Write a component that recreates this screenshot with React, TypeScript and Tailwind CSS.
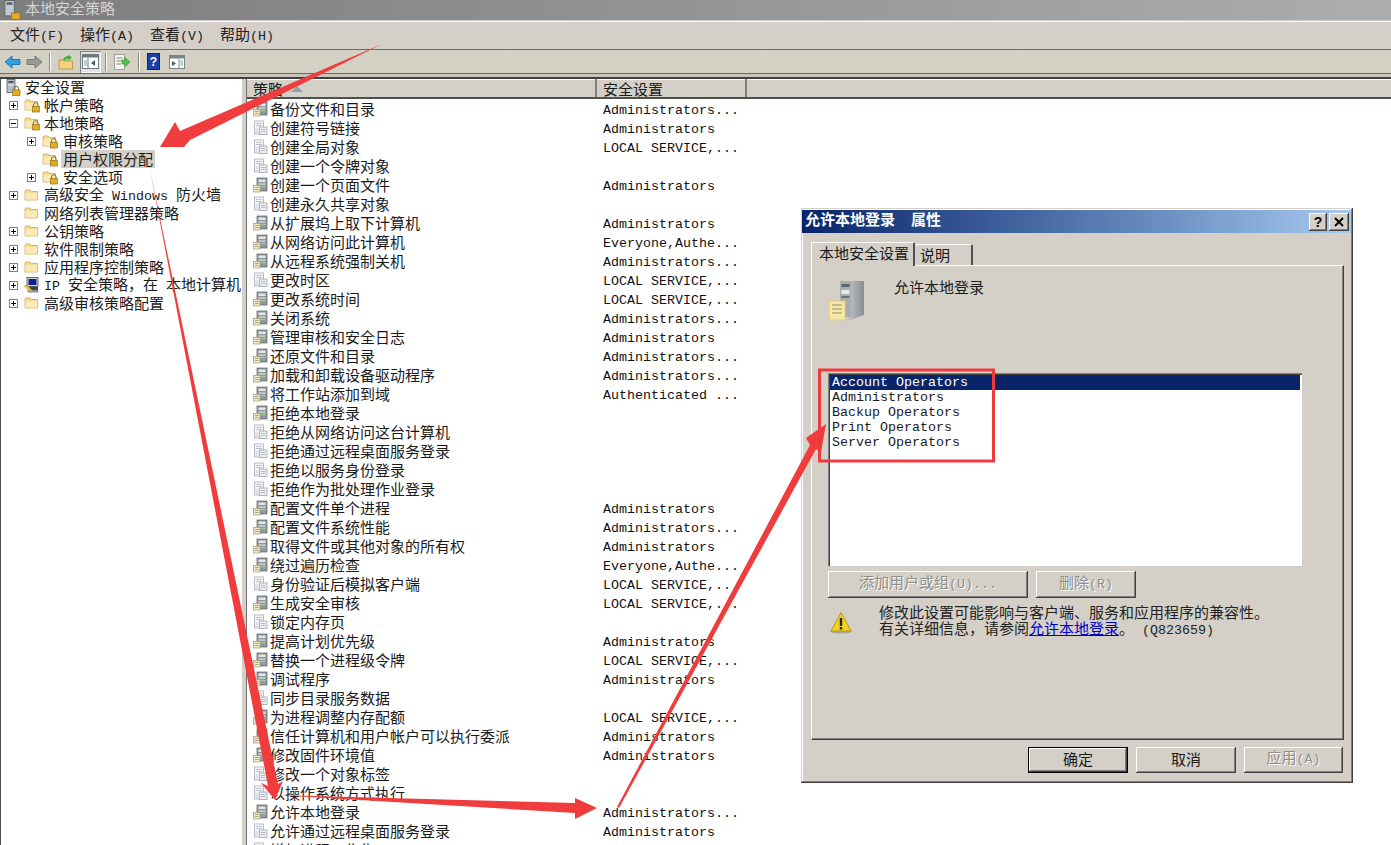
import React from "react";

const Mixed = ({ t }: { t: string }) => (
  <>
    {t.split(/([\x20-\x7e]+)/).map((p, i) =>
      /[\x20-\x7e]/.test(p) ? (
        <span key={i} className="font-['Liberation_Mono',monospace] text-[13.33px]">
          {p}
        </span>
      ) : (
        <span key={i}>{p}</span>
      )
    )}
  </>
);

const FolderIcon = ({ lock = false }: { lock?: boolean }) => (
  <svg width="16" height="16" viewBox="0 0 16 16" className="shrink-0">
    <path d="M1 4.5 L1.5 3 H6 L7 4.5 H13.5 V13 H1 Z" fill="#f5dc94" stroke="#c9a860" strokeWidth="0.8" />
    <path d="M1.5 6 H13.2 V12.6 H1.5 Z" fill="#fbeab8" />
    {lock && (
      <g>
        <path d="M9.5 9.5 V8 a2.3 2.3 0 0 1 4.6 0 V9.5" fill="none" stroke="#7d6a30" strokeWidth="1" />
        <rect x="8.5" y="9.5" width="6.8" height="5.5" fill="#e3ad1f" stroke="#96701a" strokeWidth="0.7" />
      </g>
    )}
  </svg>
);

const RootIcon = () => (
  <svg width="15" height="17" viewBox="0 0 15 17" className="shrink-0">
    <rect x="1" y="0.5" width="8" height="13" fill="#b5bcc4" stroke="#596068" strokeWidth="0.8" />
    <rect x="2.5" y="2" width="5" height="2" fill="#4c5560" />
    <rect x="2.5" y="5.5" width="5" height="1" fill="#eef0f2" />
    <path d="M8 11 V9.5 a2.2 2.2 0 0 1 4.4 0 V11" fill="none" stroke="#6d5c28" strokeWidth="1" />
    <rect x="6.5" y="11" width="7.5" height="5.5" fill="#e3ad1f" stroke="#96701a" strokeWidth="0.7" />
  </svg>
);

const IpIcon = () => (
  <svg width="16" height="17" viewBox="0 0 16 17" className="shrink-0">
    <rect x="3" y="0.5" width="11" height="9" fill="#d2d5d8" stroke="#444" strokeWidth="0.8" />
    <rect x="4.5" y="2" width="8" height="6" fill="#10208e" />
    <rect x="5" y="10" width="9" height="3" fill="#39424e" />
    <rect x="3.5" y="13" width="11" height="2.5" fill="#8e949c" />
    <path d="M0.5 9 L5 13.5 L7.5 15.5 L8.5 14 L3 8 Z" fill="#efd23a" stroke="#8a7a18" strokeWidth="0.6" />
  </svg>
);

const PolicyDark = () => (
  <svg width="15" height="16" viewBox="0 0 15 16" className="shrink-0">
    <rect x="4" y="1" width="10" height="13" fill="#8f98a0" stroke="#5b6268" strokeWidth="0.7" />
    <rect x="5.5" y="2.5" width="7" height="2.5" fill="#e4e7e4" />
    <rect x="5.5" y="6.5" width="7" height="1.2" fill="#dfe6da" />
    <rect x="5.5" y="9" width="7" height="1.2" fill="#a9c79a" />
    <rect x="0.5" y="8.5" width="6.5" height="6.5" fill="#f0e8c8" stroke="#a59a6a" strokeWidth="0.7" />
    <path d="M1.8 10.5 H5.7 M1.8 12.5 H5.7" stroke="#8d8a70" strokeWidth="0.7" />
  </svg>
);

const PolicyLight = () => (
  <svg width="15" height="16" viewBox="0 0 15 16" className="shrink-0">
    <rect x="1.5" y="1" width="9" height="13" fill="#f4f5f7" stroke="#b2b6c0" strokeWidth="0.9" />
    <path d="M3 3.5 H9 M3 5.5 H9" stroke="#b8bcc8" strokeWidth="0.9" />
    <rect x="6.5" y="7" width="7.5" height="7.5" fill="#eceef2" stroke="#a8adb8" strokeWidth="0.9" />
    <path d="M8 9.5 H12.5 M8 11.5 H12.5" stroke="#a8adb8" strokeWidth="0.8" />
    <rect x="2.5" y="8" width="3" height="5" fill="#dde0e6" />
  </svg>
);

const Expander = ({ minus = false }: { minus?: boolean }) => (
  <span className="relative w-[9px] h-[9px] border border-[#808080] bg-white shrink-0 flex items-center justify-center">
    <span className="w-[5px] h-px bg-black" />
    {!minus && <span className="absolute w-px h-[5px] bg-black" />}
  </span>
);

type TreeItem = { label: string; exp?: "plus" | "minus"; lock?: boolean; icon?: "ip" };

const level1a: TreeItem[] = [
  { label: "帐户策略", exp: "plus", lock: true },
  { label: "本地策略", exp: "minus", lock: true },
];
const level1b: TreeItem[] = [
  { label: "高级安全 Windows 防火墙", exp: "plus" },
  { label: "网络列表管理器策略" },
  { label: "公钥策略", exp: "plus" },
  { label: "软件限制策略", exp: "plus" },
  { label: "应用程序控制策略", exp: "plus" },
  { label: "IP 安全策略\uFF0C在 本地计算机", exp: "plus", icon: "ip" },
  { label: "高级审核策略配置", exp: "plus" },
];

const Level1 = ({ item }: { item: TreeItem }) => (
  <div className="flex items-center h-[18px] pl-[8px]">
    {item.exp ? <Expander minus={item.exp === "minus"} /> : <span className="w-[9px] shrink-0" />}
    <span className="ml-[6px] mr-[4px] flex">{item.icon === "ip" ? <IpIcon /> : <FolderIcon lock={item.lock} />}</span>
    <span>
      <Mixed t={item.label} />
    </span>
  </div>
);

const Level2 = ({ label, exp, selected }: { label: string; exp?: boolean; selected?: boolean }) => (
  <div className="flex items-center h-[18px] pl-[26px]">
    {exp ? <Expander /> : <span className="w-[9px] shrink-0" />}
    <span className="ml-[6px] mr-[3px] flex">
      <FolderIcon lock />
    </span>
    <span className={selected ? "bg-[#d4d0c8] px-[2px]" : "px-[2px]"}>{label}</span>
  </div>
);

const A = "Administrators";
const AA = "Administrators...";
const L = "LOCAL SERVICE,...";
const E = "Everyone,Authe...";
const policies: [string, string, 0 | 1][] = [
  ["备份文件和目录", AA, 1],
  ["创建符号链接", A, 0],
  ["创建全局对象", L, 0],
  ["创建一个令牌对象", "", 0],
  ["创建一个页面文件", A, 1],
  ["创建永久共享对象", "", 0],
  ["从扩展坞上取下计算机", A, 1],
  ["从网络访问此计算机", E, 1],
  ["从远程系统强制关机", AA, 1],
  ["更改时区", L, 0],
  ["更改系统时间", L, 1],
  ["关闭系统", AA, 1],
  ["管理审核和安全日志", A, 1],
  ["还原文件和目录", AA, 1],
  ["加载和卸载设备驱动程序", AA, 1],
  ["将工作站添加到域", "Authenticated ...", 1],
  ["拒绝本地登录", "", 1],
  ["拒绝从网络访问这台计算机", "", 0],
  ["拒绝通过远程桌面服务登录", "", 0],
  ["拒绝以服务身份登录", "", 0],
  ["拒绝作为批处理作业登录", "", 0],
  ["配置文件单个进程", A, 1],
  ["配置文件系统性能", AA, 1],
  ["取得文件或其他对象的所有权", A, 1],
  ["绕过遍历检查", E, 1],
  ["身份验证后模拟客户端", L, 0],
  ["生成安全审核", L, 1],
  ["锁定内存页", "", 0],
  ["提高计划优先级", A, 1],
  ["替换一个进程级令牌", L, 1],
  ["调试程序", A, 1],
  ["同步目录服务数据", "", 0],
  ["为进程调整内存配额", L, 1],
  ["信任计算机和用户帐户可以执行委派", A, 1],
  ["修改固件环境值", A, 1],
  ["修改一个对象标签", "", 0],
  ["以操作系统方式执行", "", 0],
  ["允许本地登录", AA, 1],
  ["允许通过远程桌面服务登录", A, 0],
  ["增加进程工作集", "", 0],
];

const raised =
  "shadow-[inset_-1px_-1px_0_#404040,inset_1px_1px_0_#ffffff,inset_-2px_-2px_0_#808080]";

const DisabledLabel = ({ t }: { t: string }) => (
  <span className="text-[#8f8d88] [text-shadow:1px_1px_0_#ffffff] -mt-[3px]">
    <Mixed t={t} />
  </span>
);

const Toolbar = () => (
  <div className="flex items-center h-[23px] pl-[4px]">
    <svg width="17" height="16" viewBox="0 0 17 16" className="mr-[5px]">
      <path d="M1 8 L8 2 V5.5 H16 V10.5 H8 V14 Z" fill="#2f9fe0" stroke="#1468a8" strokeWidth="0.8" />
    </svg>
    <svg width="17" height="16" viewBox="0 0 17 16">
      <path d="M16 8 L9 2 V5.5 H1 V10.5 H9 V14 Z" fill="#9a9a94" stroke="#6a6a64" strokeWidth="0.8" />
    </svg>
    <span className="ml-[6px] mr-[7px] w-px h-[18px] bg-[#8a8880] border-r border-white box-content" />
    <svg width="16" height="16" viewBox="0 0 16 16">
      <path d="M1 6 H6 L7 7 H14.5 V15 H1 Z" fill="#f2d27a" stroke="#b18f3c" strokeWidth="0.8" />
      <path d="M5 6 C6 3 8 2 10 2 L10 0.5 L14 3.5 L10 6.5 L10 4.8 C8.5 4.8 7.5 5.5 7 7 Z" fill="#48b043" />
    </svg>
    <span className="ml-[6px] w-[21px] h-[22px] flex items-center justify-center bg-[#e6e3dc] shadow-[inset_1px_1px_0_#808080,inset_-1px_-1px_0_#ffffff]">
      <svg width="17" height="15" viewBox="0 0 17 15">
        <rect x="0.5" y="0.5" width="16" height="14" fill="#fff" stroke="#6f7a80" />
        <rect x="1" y="1" width="15" height="2.5" fill="#6f7a80" />
        <path d="M6 4 V14" stroke="#6f7a80" />
        <path d="M2 7 H5 M2 9 H5 M2 11 H5" stroke="#7fa080" />
        <path d="M13 6 L9 9 L13 12 Z" fill="#3d5d70" />
      </svg>
    </span>
    <span className="ml-[4px] mr-[7px] w-px h-[18px] bg-[#8a8880] border-r border-white box-content" />
    <svg width="16" height="16" viewBox="0 0 16 16">
      <rect x="0.5" y="0.5" width="10" height="15" fill="#f5f6f0" stroke="#8a9088" strokeWidth="0.8" />
      <path d="M2.5 4 H8.5 M2.5 7 H8.5 M2.5 10 H7" stroke="#7a8a70" />
      <path d="M8 6 H11 V3.5 L16 8 L11 12.5 V10 H8 Z" fill="#58c04a" stroke="#2f8a2c" strokeWidth="0.5" />
    </svg>
    <span className="ml-[8px] mr-[7px] w-px h-[18px] bg-[#8a8880] border-r border-white box-content" />
    <span className="w-[13px] h-[17px] flex items-center justify-center bg-[#1f3fa8] border border-[#14246a] text-white text-[12px] font-bold leading-none font-['Liberation_Sans',sans-serif]">
      ?
    </span>
    <svg width="16" height="14" viewBox="0 0 16 14" className="ml-[9px]">
      <rect x="0.5" y="0.5" width="15" height="13" fill="#fff" stroke="#7a8488" />
      <rect x="1" y="1" width="14" height="2.5" fill="#7a8488" />
      <path d="M10 4 V13" stroke="#7a8488" />
      <path d="M3 6 L7 8.5 L3 11 Z" fill="#3d5d70" />
      <path d="M11.5 6 H14 M11.5 8 H14 M11.5 10 H14" stroke="#7fa080" />
    </svg>
  </div>
);

const Dialog = () => (
  <div className="absolute left-[801px] top-[208px] w-[552px] h-[575px] bg-[#d4d0c8] pt-[2px] pl-[1px] pr-[2px] shadow-[inset_-1px_-1px_0_#404040,inset_1px_1px_0_#d4d0c8,inset_-2px_-2px_0_#808080,inset_2px_2px_0_#ffffff]">
    <div className="h-[23px] flex items-center justify-between pl-[3px] pr-[2px] bg-gradient-to-r from-[#0a246a] to-[#a6caf0] text-white font-bold">
      <span className="-mt-[2px]"><Mixed t="允许本地登录  属性" /></span>
      <div className="flex gap-[2px]">
        <span className={`w-[18px] h-[18px] bg-[#d4d0c8] flex items-center justify-center text-black text-[14px] font-bold leading-none font-['Liberation_Sans',sans-serif] ${raised}`}>
          ?
        </span>
        <svg width="20" height="18" viewBox="0 0 20 18" className={`bg-[#d4d0c8] ${raised}`}>
          <path d="M6 5 L14 13 M14 5 L6 13" stroke="#000" strokeWidth="2" />
        </svg>
      </div>
    </div>

    <div className="ml-[9px] mt-[9px] flex items-end h-[23px] relative z-10">
      <div className="w-[104px] h-[24px] -mb-px bg-[#d4d0c8] pl-[7px] pb-[3px] flex items-center border-l border-t border-white rounded-t-[2px] border-r-2 border-r-[#505050] z-10">
        本地安全设置
      </div>
      <div className="w-[58px] h-[21px] pl-[5px] pb-[1px] flex items-center border-t border-white border-r-2 border-r-[#505050] rounded-t-[2px]">
        说明
      </div>
    </div>

    <div className="ml-[9px] w-[533px] h-[475px] pl-[16px] pt-[15px] border border-t-white border-l-white border-r-[#404040] border-b-[#404040] shadow-[inset_-1px_-1px_0_#808080]">
      <div className="h-[92px] flex items-start">
        <svg width="37" height="40" viewBox="0 0 37 40" className="shrink-0">
          <defs>
            <linearGradient id="srv" x1="0" x2="1" y1="0" y2="0">
              <stop offset="0" stopColor="#dfe2e4" />
              <stop offset="1" stopColor="#868c92" />
            </linearGradient>
          </defs>
          <path d="M12 0 H36 V34 L22 39 H12 Z" fill="url(#srv)" />
          <rect x="12" y="0" width="11" height="36" fill="#a9adb0" />
          <rect x="13.5" y="3" width="8" height="3" fill="#5c646a" />
          <rect x="13.5" y="9" width="8" height="4" fill="#e8eaea" />
          <rect x="13.5" y="15" width="8" height="2" fill="#6c7277" />
          <rect x="1" y="20" width="16" height="19" fill="#f7e9a5" stroke="#ddcc80" />
          <path d="M4 24 H14 M4 28 H14 M4 32 H14" stroke="#8f8f70" />
        </svg>
        <span className="ml-[29px] -mt-[4px] leading-[20px]">允许本地登录</span>
      </div>
      <div className="w-[474px] h-[193px] bg-white p-[2px] leading-[15px] font-['Liberation_Mono',monospace] text-[13.33px] shadow-[inset_1px_1px_0_#808080,inset_2px_2px_0_#404040,inset_-1px_-1px_0_#ffffff]">
        <div className="h-[15px] pl-[2px] bg-[#0a246a] text-white">Account Operators</div>
        <div className="h-[15px] pl-[2px]">Administrators</div>
        <div className="h-[15px] pl-[2px]">Backup Operators</div>
        <div className="h-[15px] pl-[2px]">Print Operators</div>
        <div className="h-[15px] pl-[2px]">Server Operators</div>
      </div>
      <div className="flex gap-[8px] mt-[5px]">
        <div className={`w-[200px] h-[27px] flex items-center justify-center ${raised}`}>
          <DisabledLabel t="添加用户或组(U)..." />
        </div>
        <div className={`w-[100px] h-[27px] flex items-center justify-center ${raised}`}>
          <DisabledLabel t="删除(R)" />
        </div>
      </div>
      <div className="flex mt-[13px]">
        <svg width="24" height="24" viewBox="0 0 24 24" className="shrink-0 ml-[1px]">
          <ellipse cx="12" cy="20.5" rx="11" ry="2" fill="#a9a69c" />
          <path d="M12 1.5 L22 20 H2 Z" fill="#f4d21c" stroke="#b79a18" strokeWidth="1" />
          <rect x="10.8" y="7" width="2.4" height="8" fill="#222" />
          <rect x="10.8" y="16" width="2.4" height="2.4" fill="#222" />
        </svg>
        <div className="ml-[26px] leading-[16px] -mt-[7px] text-[#222]">
          <div>修改此设置可能影响与客户端、服务和应用程序的兼容性。</div>
          <div>
            {"有关详细信息\uFF0C请参阅"}<span className="text-[#0000c8] underline">允许本地登录</span>。<Mixed t=" (Q823659)" />
          </div>
        </div>
      </div>
    </div>

    <div className="ml-[9px] w-[532px] mt-[7px] flex justify-end">
      <div className={`w-[100px] h-[26px] pb-[3px] flex items-center justify-center border border-black ${raised}`}>确定</div>
      <div className={`ml-[8px] w-[100px] h-[26px] pb-[3px] flex items-center justify-center ${raised}`}>取消</div>
      <div className={`ml-[8px] w-[99px] h-[26px] flex items-center justify-center ${raised}`}>
        <DisabledLabel t="应用(A)" />
      </div>
    </div>
  </div>
);

const Annotations = () => (
  <svg width="1391" height="845" viewBox="0 0 1391 845" className="absolute left-0 top-0 pointer-events-none">
    <g fill="#f03c3c">
      <polygon points="382,44 190,140 184,147 160,147 175,122 180,131" />
      <polygon points="150,170 278,784 283,781 275,800 261,783 268,786" />
      <polygon points="276,795 575,803 575,798 597,808 575,819 575,813" />
      <polygon points="617,807 810,445 806,438 826,424 821,452 816,449 619,808" />
    </g>
    <rect x="819.5" y="370" width="174" height="91" fill="none" stroke="#ec3a3d" strokeWidth="3" />
  </svg>
);

export default function App() {
  return (
    <div className="relative w-[1391px] h-[845px] overflow-hidden bg-[#d4d0c8] text-[15px] text-[#1a1a1a] leading-[18px] whitespace-pre font-['Noto_Sans_CJK_SC','Noto_Sans_CJK_JP',sans-serif]">
      <div className="h-[20px] pl-[3px] flex items-center bg-gradient-to-r from-[#7d7d7d] to-[#adadad] overflow-hidden">
        <svg width="19" height="20" viewBox="0 0 15 17" className="shrink-0 mr-[3px]">
          <rect x="1" y="0.5" width="8" height="13" fill="#c5cad0" stroke="#596068" strokeWidth="0.8" />
          <rect x="2.5" y="2" width="5" height="2" fill="#4c5560" />
          <rect x="6.5" y="11" width="7.5" height="5.5" fill="#e3ad1f" stroke="#96701a" strokeWidth="0.7" />
        </svg>
        <span className="text-[#d4d4d4] -mt-[4px]">本地安全策略</span>
      </div>
      <div className="h-[2px] bg-[#c8c8c8] border-b border-white" />
      <div className="h-[28px] pl-[10px] flex items-center gap-[16px] border-b border-[#6e6c64] bg-gradient-to-b from-[#d6cec8] to-[#d3d0c8] text-[#222]">
        <span><Mixed t="文件(F)" /></span>
        <span><Mixed t="操作(A)" /></span>
        <span><Mixed t="查看(V)" /></span>
        <span><Mixed t="帮助(H)" /></span>
      </div>
      <div className="h-[24px] border-b border-[#6e6c64] bg-[#d3d0c4]">
        <Toolbar />
      </div>
      <div className="h-[5px] bg-[#c8c4bc] border-b-2 border-[#404040]" />
      <div className="flex h-[766px]">
        <div className="w-[242px] shrink-0 bg-white border-l border-[#505050] overflow-hidden">
          <div className="-mt-px flex items-center h-[18px] pl-[5px]">
            <RootIcon />
            <span className="ml-[4px]">安全设置</span>
          </div>
          {level1a.map((i) => (
            <Level1 key={i.label} item={i} />
          ))}
          <Level2 label="审核策略" exp />
          <Level2 label="用户权限分配" selected />
          <Level2 label="安全选项" exp />
          {level1b.map((i) => (
            <Level1 key={i.label} item={i} />
          ))}
        </div>
        <div className="w-[5px] shrink-0 bg-[#d4d0c8] border-r border-[#707070]" />
        <div className="flex-1 bg-white overflow-hidden">
          <div className="h-[20px] flex items-center bg-[#d4d0c8] border-b-2 border-[#505050] shadow-[inset_0_1px_0_#ffffff]">
            <div className="relative w-[350px] h-full pl-[6px] pt-[1px] flex items-center border-r-2 border-r-[#808080]">
              策略
              <svg width="12" height="6" viewBox="0 0 12 6" className="ml-[8px]">
                <path d="M6 0 L12 6 H0 Z" fill="#8fa0aa" />
              </svg>
            </div>
            <div className="w-[150px] h-full pl-[6px] pt-[1px] flex items-center border-r-2 border-r-[#808080]">安全设置</div>
          </div>
          {policies.map(([name, val, dark]) => (
            <div key={name} className="flex items-center h-[19px]">
              <div className="w-[356px] pl-[6px] flex items-center shrink-0">
                {dark ? <PolicyDark /> : <PolicyLight />}
                <span className="ml-[2px]">{name}</span>
              </div>
              <span className="mt-[5px] font-['Liberation_Mono',monospace] text-[13.33px] text-[#111]">{val}</span>
            </div>
          ))}
        </div>
      </div>
      <Dialog />
      <Annotations />
    </div>
  );
}
